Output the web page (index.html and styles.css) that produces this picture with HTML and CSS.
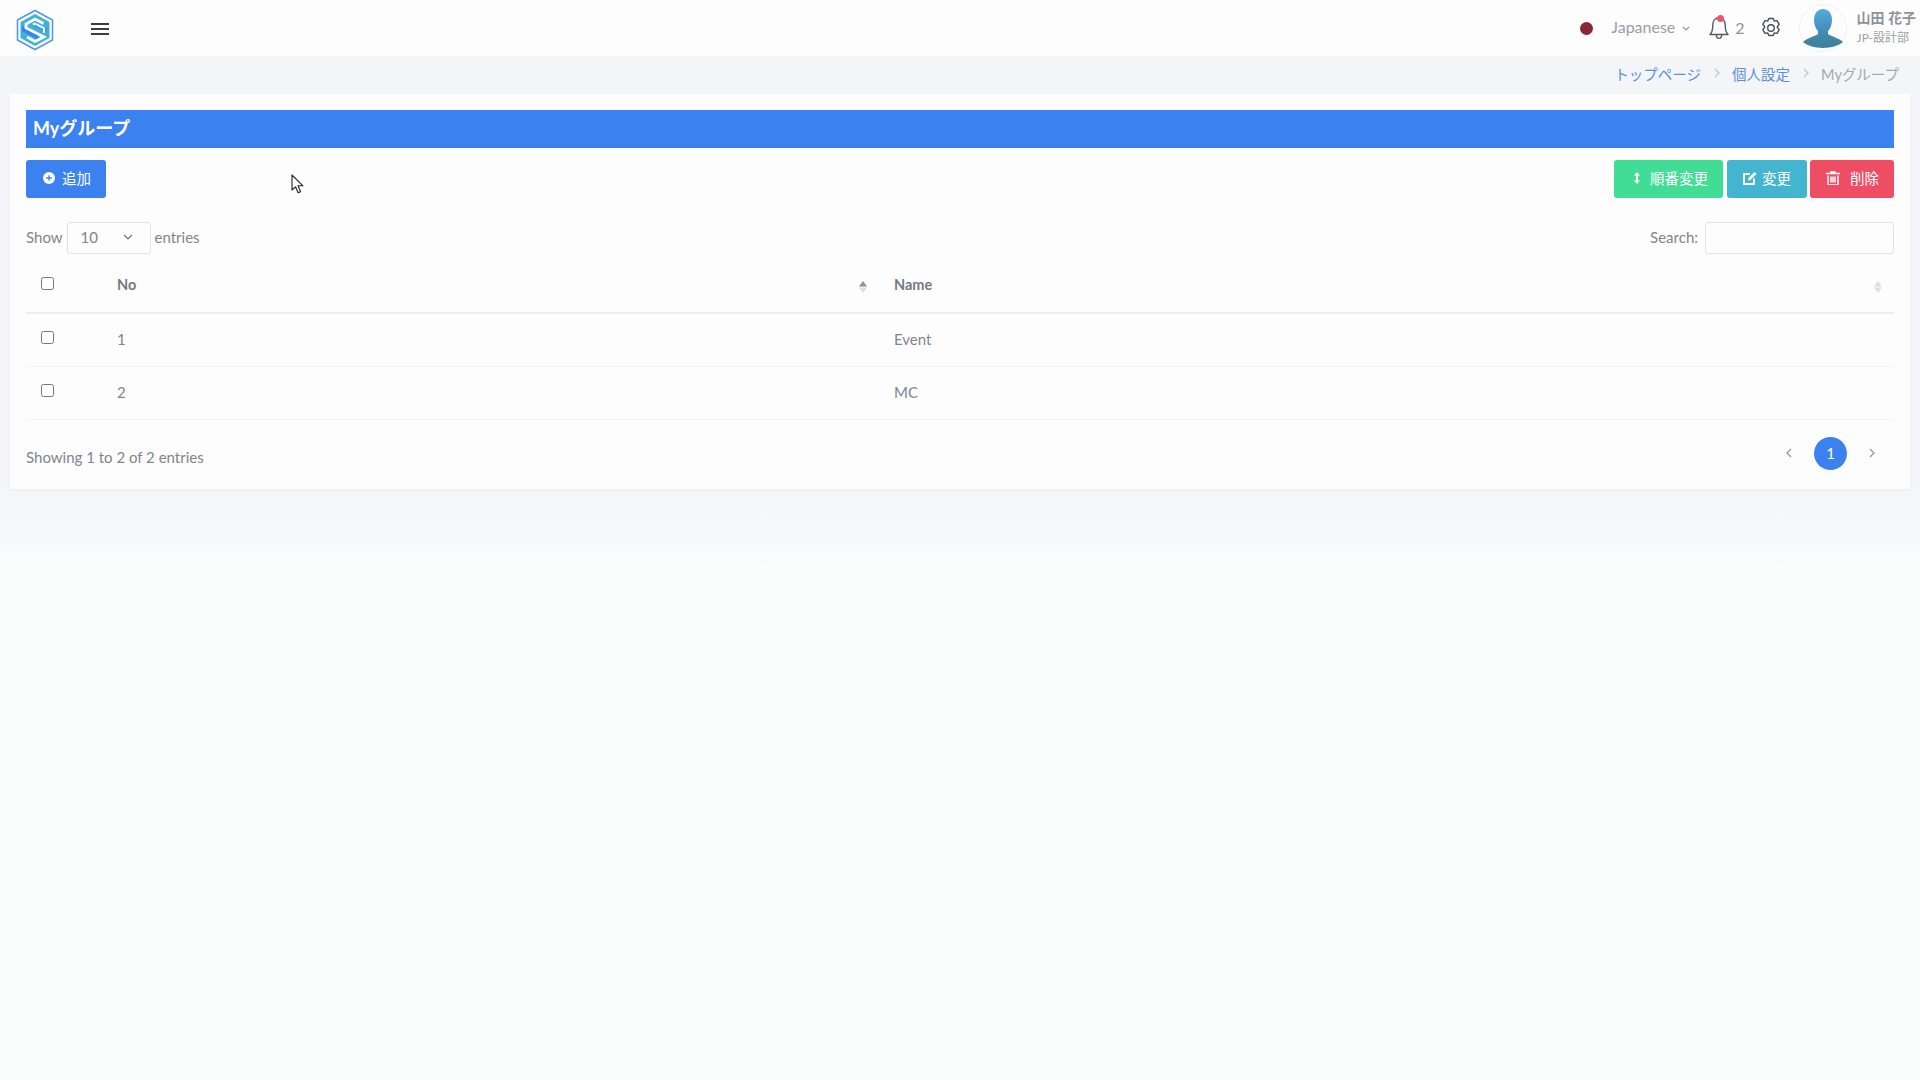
FILE: index.html
```html
<!DOCTYPE html>
<html lang="ja">
<head>
<meta charset="utf-8">
<title>Myグループ</title>
<link rel="stylesheet" href="styles.css">
</head>
<body>
<header class="topbar">
  <div class="top-left">
    <svg class="logo" viewBox="0 0 38 42" width="38" height="42">
      <path d="M19 1.500 36.500 11v20L19 40.500 1.500 31V11Z" fill="#fff" stroke="#4f9be6" stroke-width="1.600"/>
      <path d="M19 5 33.500 13v16L19 37 4.500 29V13Z" fill="#3fb3d6"/>
      <path d="M6 17 22 25.500v5L6 22Z" fill="#3b7ff0"/>
      <path d="M17 17 31 24v-5l-11-5.500Z" fill="#3b9be0"/>
      <path d="M27.500 14.500 19 10 10 15v4l18 9-9 4.500-8-4.500" fill="none" stroke="#fff" stroke-width="2.800"/>
      <path d="M17 15.500 19 14.500 28 19v5" fill="none" stroke="#fff" stroke-width="2"/>
    </svg>
    <svg class="burger" viewBox="0 0 18 12" width="18" height="12"><path d="M0 1h18M0 6h18M0 11h18" stroke="#3d3d3d" stroke-width="2"/></svg>
  </div>
  <div class="top-right">
    <span class="dot"></span>
    <span class="lang">Japanese</span>
    <svg class="lang-caret" viewBox="0 0 8 5" width="8" height="5"><path d="M.8.8 4 4l3.200-3.200" fill="none" stroke="#8a8f96" stroke-width="1.100"/></svg>
    <span class="bell">
      <svg viewBox="0 0 22 24" width="22" height="24"><path d="M11 1.800c-4 0-6.200 3.200-6.200 7.200 0 5.500-1 7.800-2.800 9.500h18c-1.800-1.700-2.800-4-2.800-9.500 0-4-2.200-7.200-6.200-7.200ZM8.300 18.800c0 4.700 5.400 4.700 5.400 0" fill="none" stroke="#555b61" stroke-width="1.400" stroke-linejoin="round"/></svg>
      <i class="bell-badge"></i>
    </span>
    <span class="count">2</span>
    <svg class="gear" viewBox="0 0 22 22" width="22" height="22"><path d="M8.800 1.500h4.400l1 2.600 2.800-.5 2.200 3.800-1.800 2.100 0 1 1.800 2.100-2.200 3.800-2.800-.5-1 2.600H8.800l-1-2.600-2.800.5-2.200-3.800 1.800-2.100 0-1-1.800-2.100L5 3.600l2.800.5Z" fill="none" stroke="#4a5056" stroke-width="1.400" stroke-linejoin="round"/><circle cx="11" cy="11" r="3.300" fill="none" stroke="#4a5056" stroke-width="1.400"/></svg>
    <svg class="avatar" viewBox="0 0 48 48" width="48" height="48">
      <defs><linearGradient id="av" x1="0" y1="0" x2="0" y2="1"><stop offset="0" stop-color="#4fb0d6"/><stop offset=".45" stop-color="#4a90c0"/><stop offset=".7" stop-color="#3f8aa6"/><stop offset="1" stop-color="#3f7f9a"/></linearGradient></defs>
      <circle cx="24" cy="24" r="23.500" fill="#fdfdfd" stroke="#eef1f4"/>
      <path d="M24 5c6 0 9 5 9 11 0 5-2 9-4 11v3c2 2 11 4 15 8-3 3-12 6-20 6s-17-3-20-6c4-4 13-6 15-8v-3c-2-2-4-6-4-11 0-6 3-11 9-11Z" fill="url(#av)"/>
    </svg>
    <div class="user">
      <span class="user-name">山田 花子</span>
      <span class="user-dept">JP-設計部</span>
    </div>
  </div>
</header>

<nav class="crumbs">
  <a class="crumb-link">トップページ</a>
  <svg class="sep" viewBox="0 0 6 10" width="6" height="10"><path d="M1 1l4 4-4 4" fill="none" stroke="#c5c8cc" stroke-width="1.300"/></svg>
  <a class="crumb-link">個人設定</a>
  <svg class="sep" viewBox="0 0 6 10" width="6" height="10"><path d="M1 1l4 4-4 4" fill="none" stroke="#c5c8cc" stroke-width="1.300"/></svg>
  <span class="crumb-current">Myグループ</span>
</nav>

<main class="card">
  <h1 class="title">Myグループ</h1>
  <div class="actions">
    <button class="btn btn-blue"><svg viewBox="0 0 12 12" width="12" height="12"><circle cx="6" cy="6" r="6" fill="#fff"/><path d="M6 3.200v5.600M3.200 6h5.600" stroke="#3b82f0" stroke-width="1.300"/></svg><span>追加</span></button>
    <div class="actions-right">
      <button class="btn btn-green"><svg viewBox="0 0 8 12" width="8" height="12"><path d="M4 0 7 3.500H5v5h2L4 12 1 8.500h2v-5H1Z" fill="#fff"/></svg><span>順番変更</span></button>
      <button class="btn btn-cyan"><svg viewBox="0 0 14 14" width="14" height="14"><path d="M11 7.500V13H1V3h6" fill="none" stroke="#fff" stroke-width="1.800"/><path d="M5 9.500 5.500 7 11.500 1l2 2-6 6Z" fill="#fff"/></svg><span>変更</span></button>
      <button class="btn btn-red"><svg viewBox="0 0 14 14" width="14" height="14"><path d="M0 2.500h14M5 2.500V1h4v1.500M2 4.500V14h10V4.500M5 5.500v6M7 5.500v6M9 5.500v6" fill="none" stroke="#fff" stroke-width="1.500"/></svg><span>削除</span></button>
    </div>
  </div>
  <div class="controls">
    <label class="length">Show
      <span class="select">10<svg viewBox="0 0 10 6" width="10" height="6"><path d="M1 1l4 4 4-4" fill="none" stroke="#6b7178" stroke-width="1.200"/></svg></span>
      entries</label>
    <label class="search">Search:<span class="search-input"></span></label>
  </div>
  <table class="table">
    <thead>
      <tr>
        <th class="col-check"><input type="checkbox"></th>
        <th class="col-no"><span class="th-in">No<svg viewBox="0 0 8 12" width="8" height="12"><path d="M4 0 8 5.500H0Z" fill="#8b9097"/><path d="M4 12 0 6.500h8Z" fill="#dcdfe3"/></svg></span></th>
        <th class="col-name"><span class="th-in">Name<svg viewBox="0 0 8 12" width="8" height="12"><path d="M4 0 8 5.500H0Z" fill="#dcdfe3"/><path d="M4 12 0 6.500h8Z" fill="#dcdfe3"/></svg></span></th>
      </tr>
    </thead>
    <tbody>
      <tr><td class="col-check"><input type="checkbox"></td><td>1</td><td>Event</td></tr>
      <tr><td class="col-check"><input type="checkbox"></td><td>2</td><td>MC</td></tr>
    </tbody>
  </table>
  <div class="table-foot">
    <span class="info">Showing 1 to 2 of 2 entries</span>
    <div class="pager">
      <svg viewBox="0 0 6 10" width="6" height="10"><path d="M5 1 1 5l4 4" fill="none" stroke="#8d9299" stroke-width="1.200"/></svg>
      <span class="page-on">1</span>
      <svg viewBox="0 0 6 10" width="6" height="10"><path d="M1 1l4 4-4 4" fill="none" stroke="#8d9299" stroke-width="1.200"/></svg>
    </div>
  </div>
  <svg class="cursor" viewBox="0 0 13 20" width="13" height="20"><path d="M1 1v15l3.500-3.200 2.600 6 2.500-1-2.600-6H12Z" fill="#fff" stroke="#222" stroke-width="1.100" stroke-linejoin="round"/></svg>
</main>
</body>
</html>
```
FILE: styles.css
```css
* { box-sizing: border-box; }
html, body { height: 100%; }
body {
  margin: 0;
  height: 1080px;
  overflow: hidden;
  background: linear-gradient(#f3f5f8 0, #f3f5f8 490px, #fbfcfc 570px);
  font-family: "Lato", "Noto Sans CJK JP", sans-serif;
  font-size: 15px;
  color: #7f858c;
}
.topbar {
  height: 56px;
  background: #fdfdfd;
  display: flex;
  align-items: center;
  justify-content: space-between;
  padding: 0 4px 0 16px;
}
.top-left { display: flex; align-items: center; }
.logo { margin-top: 3px; }
.burger { margin-left: 37px; margin-top: 2px; }
.top-right { display: flex; align-items: center; }
.dot { width: 13px; height: 13px; border-radius: 50%; background: #8b2635; margin-right: 18px; }
.lang { font-size: 16px; color: #9a9ea4; margin-top: -4px; }
.lang-caret { margin-left: 7px; }
.bell { position: relative; display: flex; margin-left: 18px; }
.bell-badge { position: absolute; top: -1px; right: 6px; width: 7px; height: 7px; border-radius: 50%; background: #ee5467; }
.count { margin-left: 5px; font-size: 16px; color: #8f9399; margin-top: -2px; }
.gear { margin-left: 15px; }
.avatar { margin-left: 17px; }
.user { display: flex; flex-direction: column; margin-left: 10px; }
.user-name { font-size: 14px; font-weight: 700; line-height: 20px; color: #8f9399; white-space: nowrap; }
.user-dept { font-size: 12px; line-height: 20px; color: #9da1a6; white-space: nowrap; }
.crumbs {
  height: 38px;
  display: flex;
  align-items: center;
  justify-content: flex-end;
  padding: 0 21px 4px 0;
  font-size: 14.500px;
}
.crumb-link { color: #5b8fd6; }
.crumb-current { color: #a5a9ae; }
.sep { margin: 0 12.500px; }
.card {
  position: relative;
  margin: 0 10px;
  height: 395px;
  padding: 16px 16px 0;
  background: #fdfdfd;
  box-shadow: 0 1px 3px rgba(0, 0, 0, .03);
}
.title {
  margin: 0;
  height: 38px;
  padding: 0 7px;
  background: #3b82f0;
  color: #fff;
  font-size: 18px;
  font-weight: 700;
  line-height: 36px;
}
.actions { display: flex; justify-content: space-between; margin-top: 12px; }
.actions-right { display: flex; }
.btn {
  height: 38px;
  border: 0;
  border-radius: 3px;
  padding: 0 0 0 16px;
  display: flex;
  align-items: center;
  gap: 7px;
  color: #fff;
  font-family: inherit;
  font-size: 14.500px;
  white-space: nowrap;
}
.btn svg { margin-top: -2px; }
.btn span { margin-top: -4px; }
.btn-blue { background: #3b82f0; width: 80px; padding-left: 17px; }
.btn-green { background: #41dc95; width: 109px; padding-left: 19px; gap: 9px; margin-right: 4px; }
.btn-cyan { background: #43b5d0; width: 80px; margin-right: 3px; gap: 5px; }
.btn-red { background: #ef4d64; width: 84px; gap: 10px; }
.controls { display: flex; justify-content: space-between; margin-top: 24px; height: 32px; }
.length { display: flex; align-items: flex-start; gap: 4px; line-height: 30px; }
.select {
  width: 84px;
  height: 32px;
  border: 1px solid #e0e3e6;
  border-radius: 3px;
  display: flex;
  align-items: center;
  justify-content: space-between;
  padding: 0 17px 2px 13px;
}
.search { display: flex; align-items: flex-start; gap: 7px; line-height: 30px; }
.search-input { width: 189px; height: 32px; border: 1px solid #e0e3e6; border-radius: 3px; }
.table { width: 100%; border-collapse: collapse; margin-top: 3px; table-layout: fixed; }
.table input { margin: 0; width: 13px; height: 13px; display: block; }
.table th { height: 56px; padding: 0 12px; text-align: left; font-weight: 700; font-size: 14.500px; border-bottom: 2px solid #eceef0; color: #74797f; }
.table td { height: 53px; padding: 0 12px 2px; border-bottom: 1px solid #f0f2f3; }
.table .col-no { width: 777px; padding-right: 15px; }
.table .col-check { width: 79px; padding-left: 15px; }
.table th.col-check input { margin-top: -2px; }
.table td.col-check input { margin-top: -3px; }
.th-in { display: flex; justify-content: space-between; align-items: center; }
.th-in svg { margin-top: 4px; }
.table-foot { display: flex; justify-content: space-between; align-items: center; margin-top: 17px; }
.info { margin-top: 7px; }
.pager { display: flex; align-items: center; gap: 22px; padding-right: 19px; }
.page-on { width: 33px; height: 33px; border-radius: 50%; background: #3b82f0; color: #fff; display: flex; align-items: center; justify-content: center; }
.cursor { position: absolute; left: 281px; top: 80px; }
```
